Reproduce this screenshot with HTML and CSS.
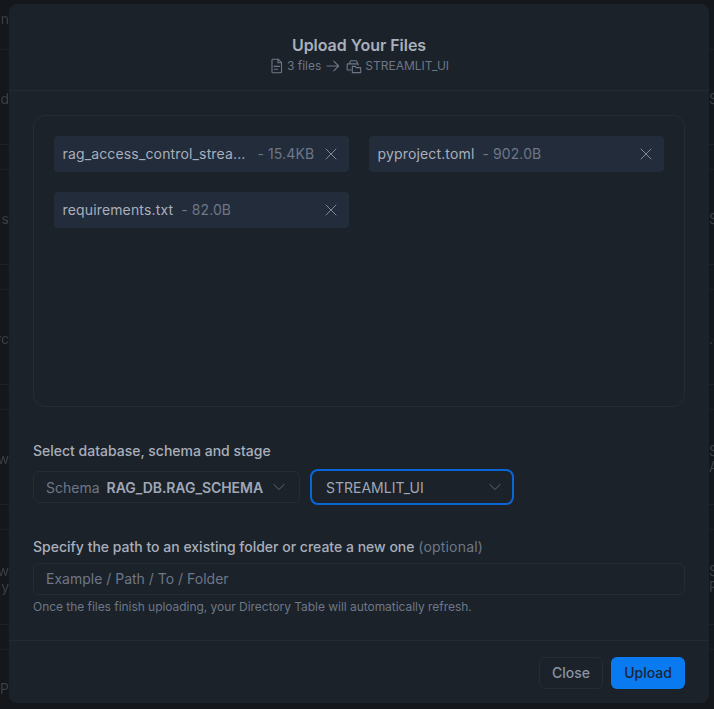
FILE: index.html
```html
<!DOCTYPE html>
<html lang="en">
<head>
<meta charset="utf-8">
<title>Upload Your Files</title>
<link rel="stylesheet" href="styles.css">
</head>
<body>
<div class="backdrop">
  <div class="bg-row bg-top"><span class="bg-l">in</span><span class="bg-r"></span></div>
  <div class="bg-row"><span class="bg-l">d</span><span class="bg-r">Sn</span></div>
  <div class="bg-gap"></div>
  <div class="bg-row"><span class="bg-l">s</span><span class="bg-r">S</span></div>
  <div class="bg-gap"></div>
  <div class="bg-row"><span class="bg-l">rc</span><span class="bg-r">.e</span></div>
  <div class="bg-gap"></div>
  <div class="bg-row"><span class="bg-l">w</span><span class="bg-r">Sn<br>Ai</span></div>
  <div class="bg-gap"></div>
  <div class="bg-row"><span class="bg-l">w<br>ly</span><span class="bg-r">Sn<br>Pc</span></div>
  <div class="bg-gap"></div>
  <div class="bg-row bg-last"><span class="bg-l">P (</span><span class="bg-r"></span></div>
</div>
<main class="modal">
  <header class="modal-head">
    <h1 class="title">Upload Your Files</h1>
    <div class="sub">
      <svg class="ic-file" width="14" height="16" viewBox="0 0 14 16" fill="none" stroke="currentColor" stroke-width="1.1" stroke-linejoin="round" stroke-linecap="round"><path d="M3.8 1.2h5.4l3.3 3.4v9.4a.8.8 0 0 1-.8.8H3.8a.8.8 0 0 1-.8-.8V2a.8.8 0 0 1 .8-.8z"/><path d="M9 1.2v3.6h3.5"/><path d="M5.2 8.4h5.2M5.2 11.2h3.4"/></svg>
      <span class="sub-files">3 files</span>
      <svg class="ic-arrow" width="14" height="12" viewBox="0 0 14 12" fill="none" stroke="currentColor" stroke-width="1.1" stroke-linecap="round" stroke-linejoin="round"><path d="M1 6h11.5M7.8 1.2 12.6 6l-4.8 4.8"/></svg>
      <svg class="ic-stage" width="16" height="15" viewBox="0 0 16 15" fill="none" stroke="currentColor" stroke-width="1.1" stroke-linejoin="round"><path d="M5.5 11H1.2V5.6a.7.7 0 0 1 .7-.7h9.6a.7.7 0 0 1 .7.7v1"/><path d="M3.4 4.7 4.6 1.8h5.8l1.4 3"/><path d="M6.3 7.4h3l1 1.2h4.4v5H6.3z"/></svg>
      <span>STREAMLIT_UI</span>
    </div>
  </header>
  <section class="modal-body">
    <div class="dropzone">
      <div class="chip">
        <span class="chip-name chip-trunc">rag_access_control_strea...</span>
        <span class="chip-size">- 15.4KB</span>
        <svg class="chip-x" width="12" height="12" viewBox="0 0 12 12" fill="none" stroke="currentColor" stroke-width="1" stroke-linecap="round"><path d="M1 1l10 10M11 1 1 11"/></svg>
      </div>
      <div class="chip">
        <span class="chip-name">pyproject.toml</span>
        <span class="chip-size">- 902.0B</span>
        <svg class="chip-x" width="12" height="12" viewBox="0 0 12 12" fill="none" stroke="currentColor" stroke-width="1" stroke-linecap="round"><path d="M1 1l10 10M11 1 1 11"/></svg>
      </div>
      <div class="chip">
        <span class="chip-name">requirements.txt</span>
        <span class="chip-size">- 82.0B</span>
        <svg class="chip-x" width="12" height="12" viewBox="0 0 12 12" fill="none" stroke="currentColor" stroke-width="1" stroke-linecap="round"><path d="M1 1l10 10M11 1 1 11"/></svg>
      </div>
    </div>
    <label class="field-label label-select">Select database, schema and stage</label>
    <div class="selects">
      <div class="select select-schema">
        <span class="sel-key">Schema</span>
        <span class="sel-val">RAG_DB.RAG_SCHEMA</span>
        <svg class="chev" width="12" height="8" viewBox="0 0 12 8" fill="none" stroke="currentColor" stroke-width="1" stroke-linecap="round" stroke-linejoin="round"><path d="M1 1.5 6 6.5l5-5"/></svg>
      </div>
      <div class="select select-stage">
        <span class="sel-stage">STREAMLIT_UI</span>
        <svg class="chev" width="12" height="8" viewBox="0 0 12 8" fill="none" stroke="currentColor" stroke-width="1" stroke-linecap="round" stroke-linejoin="round"><path d="M1 1.5 6 6.5l5-5"/></svg>
      </div>
    </div>
    <label class="field-label label-path">Specify the path to an existing folder or create a new one <span class="opt">(optional)</span></label>
    <div class="input">Example / Path / To / Folder</div>
    <p class="hint">Once the files finish uploading, your Directory Table will automatically refresh.</p>
  </section>
  <footer class="modal-foot">
    <button class="btn btn-close">Close</button>
    <button class="btn btn-upload">Upload</button>
  </footer>
</main>
</body>
</html>
```
FILE: styles.css
```css
* { box-sizing: border-box; }
html, body { margin: 0; height: 100%; }
body {
  background: #14181c;
  font-family: Inter, "Liberation Sans", sans-serif;
  overflow: hidden;
  position: relative;
}
.backdrop { display: flex; flex-direction: column; height: 709px; color: #3a3f45; font-size: 14px; line-height: 16px; }
.bg-row {
  height: 95px;
  display: flex;
  justify-content: space-between;
  align-items: center;
  flex: none;
  padding-top: 3px;
  border-bottom: 1px solid #1c2125;
}
.bg-top { height: 50px; align-items: flex-start; padding-top: 11px; }
.bg-last { height: 59px; align-items: flex-start; padding-top: 31px; border-bottom: 0; }
.bg-gap { height: 25px; flex: none; border-bottom: 1px solid #1c2125; }
.bg-l { width: 9px; overflow: hidden; display: block; direction: rtl; white-space: nowrap; text-align: right; filter: blur(.35px); }
.bg-r { width: 5px; overflow: hidden; display: block; white-space: nowrap; filter: blur(.35px); }

.modal {
  position: absolute;
  left: 9px;
  top: 4px;
  width: 700px;
  height: 699px;
  background: #1b222a;
  border-radius: 8px;
  display: flex;
  flex-direction: column;
}
.modal-head {
  height: 87px;
  flex: none;
  border-bottom: 1px solid #232a37;
  display: flex;
  flex-direction: column;
  align-items: center;
  padding-top: 31px;
}
.title { margin: 0; font-size: 16px; line-height: 20px; font-weight: 600; letter-spacing: -.04px; color: #a9afbb; }
.sub { display: flex; align-items: center; height: 16px; margin-top: 3px; font-size: 12px; line-height: 16px; color: #6e7787; }
.ic-file { margin-right: 4px; }
.ic-arrow { margin: 0 6px 0 5px; }
.ic-stage { margin-right: 3px; }

.modal-body { flex: 1; padding: 24px 24px 0; display: flex; flex-direction: column; }
.dropzone {
  height: 292px;
  flex: none;
  border: 1px solid #252c39;
  border-radius: 12px;
  padding: 20px;
  display: grid;
  grid-template-columns: 295px 295px;
  grid-auto-rows: 36px;
  gap: 20px;
  align-content: start;
}
.chip {
  background: #222c3b;
  border-radius: 4px;
  display: flex;
  align-items: center;
  padding: 0 12px 2px 8.5px;
  font-size: 14px;
  letter-spacing: .15px;
  color: #a9afbb;
}
.chip-trunc { width: 183px; }
.chip-name { flex: none; white-space: nowrap; }
.chip-size { margin-left: 8px; color: #6e7787; white-space: nowrap; letter-spacing: .1px; }
.chip-trunc + .chip-size { margin-left: 12px; }
.chip-x { margin-left: auto; margin-top: 2px; color: #7f8898; }

.field-label { display: block; font-size: 14px; line-height: 20px; font-weight: 500; color: #a9afbb; }
.label-select { margin-top: 34px; }
.opt { color: #6e7787; font-weight: 400; letter-spacing: .2px; }
.selects { display: flex; align-items: center; gap: 10px; margin-top: 8px; margin-bottom: 0; }
.select { display: flex; align-items: center; font-size: 14px; }
.select-schema {
  width: 267px;
  height: 32px;
  border: 1px solid #252c39;
  border-radius: 6px;
  padding: 0 14px 0 12px;
}
.sel-key { color: #6e7787; }
.sel-val { color: #a0a8b6; font-weight: 600; margin-left: 7px; letter-spacing: -.05px; }
.chev { margin-left: auto; color: #5f6878; }
.select-stage {
  width: 204px;
  height: 36px;
  border: 2px solid #0a66d6;
  border-radius: 8px;
  padding: 0 11px 0 14px;
  color: #a0a8b6;
}
.label-path { margin-top: 32px; }
.input {
  height: 32px;
  margin-top: 6px;
  border: 1px solid #252c39;
  border-radius: 6px;
  padding: 0 12px;
  font-size: 14px;
  line-height: 30px;
  color: #6e7787;
}
.hint { margin: 4px 0 0; font-size: 12px; line-height: 16px; letter-spacing: -.04px; color: #6e7787; }

.modal-foot {
  height: 63px;
  flex: none;
  border-top: 1px solid #232a37;
  display: flex;
  justify-content: flex-end;
  align-items: flex-start;
  gap: 8px;
  padding: 16px 24px 0;
}
.btn { height: 32px; border-radius: 6px; font-family: inherit; font-size: 14px; padding: 0 0 2px; }
.btn-close { width: 64px; background: transparent; border: 1px solid #252c39; color: #8a93a3; font-weight: 500; }
.btn-upload { width: 74px; background: #0a7af0; border: 0; color: #1a2533; font-weight: 500; }
```
